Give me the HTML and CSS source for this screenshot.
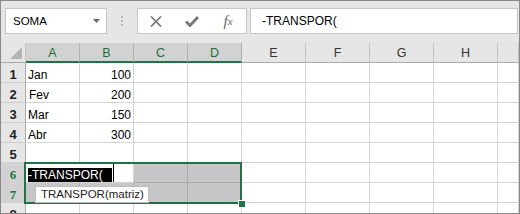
FILE: index.html
```html
<!DOCTYPE html>
<html lang="pt">
<head>
  <meta charset="UTF-8" />
  <title>Planilha - TRANSPOR</title>
  <link rel="stylesheet" href="styles.css">
</head>
<body>
  <div class="window">
    <div class="toolbar">
      <div class="namebox">
        <span>SOMA</span>
        <svg class="arrow" width="7" height="4" viewBox="0 0 7 4"><path d="M0 0h7L3.5 4z" fill="#6a6a6a"/></svg>
      </div>
      <div class="grip"><i></i><i></i><i></i></div>
      <div class="fbuttons">
        <span class="fbtn">
          <svg width="12" height="11" viewBox="0 0 12 11"><path d="M1 0.5L11 10.5M11 0.5L1 10.5" stroke="#767676" stroke-width="1.7" fill="none"/></svg>
        </span>
        <span class="fbtn">
          <svg width="14" height="11" viewBox="0 0 14 11"><path d="M1 5.5L5 9.5L13 1" stroke="#767676" stroke-width="2.8" fill="none"/></svg>
        </span>
        <span class="fbtn fx">f<small>x</small></span>
      </div>
      <div class="formula">-TRANSPOR(</div>
    </div>

    <div class="sheet">
      <div class="grid">
        <div class="corner"><b></b></div>
        <div class="ch on">A</div><div class="ch on">B</div><div class="ch on">C</div><div class="ch on">D</div>
        <div class="ch">E</div><div class="ch">F</div><div class="ch">G</div><div class="ch">H</div><div class="ch"></div>

        <div class="rh">1</div>
        <div>Jan</div><div class="num">100</div><div></div><div></div><div></div><div></div><div></div><div></div><div></div>

        <div class="rh">2</div>
        <div class="in">Fev</div><div class="num">200</div><div></div><div></div><div></div><div></div><div></div><div></div><div></div>

        <div class="rh">3</div>
        <div>Mar</div><div class="num">150</div><div></div><div></div><div></div><div></div><div></div><div></div><div></div>

        <div class="rh">4</div>
        <div>Abr</div><div class="num">300</div><div></div><div></div><div></div><div></div><div></div><div></div><div></div>

        <div class="rh">5</div>
        <div></div><div></div><div></div><div></div><div></div><div></div><div></div><div></div><div></div>

        <div class="rh on">6</div>
        <div></div><div></div><div class="shade"></div><div class="shade"></div><div></div><div></div><div></div><div></div><div></div>

        <div class="rh on">7</div>
        <div class="shade"></div><div class="shade"></div><div class="shade"></div><div class="shade"></div><div></div><div></div><div></div><div></div><div></div>

        <div class="rh">8</div>
        <div></div><div></div><div></div><div></div><div></div><div></div><div></div><div></div><div></div>
      </div>

      <div class="selection"><div class="handle"></div></div>
      <div class="editor"><span class="hl">-TRANSPOR(</span><span class="caret"></span></div>
      <div class="tip">TRANSPOR(matriz)</div>
    </div>
  </div>
</body>
</html>
```

FILE: styles.css
```css
body {
  margin: 0;
  font-family: "Liberation Sans", Arial, sans-serif;
  color: #000;
}
.window {
  width: 520px;
  height: 214px;
  box-sizing: border-box;
  border: 1px solid #8a8a8a;
  background: #e6e6e6;
  overflow: hidden;
}

/* barra de fórmulas */
.toolbar {
  display: flex;
  align-items: flex-start;
  height: 42px;
  box-sizing: border-box;
  padding: 7px 0 0 4px;
}
.namebox {
  width: 102px;
  height: 26px;
  box-sizing: border-box;
  border: 1px solid #c6c6c6;
  background: #fff;
  display: flex;
  align-items: center;
  justify-content: space-between;
  padding: 0 6px 0 7px;
  font-size: 11.5px;
}
.grip {
  width: 30px;
  display: flex;
  flex-direction: column;
  align-items: center;
  gap: 2px;
  margin-top: 8px;
}
.grip i {
  width: 2px;
  height: 2px;
  background: #b4b4b4;
}
.fbuttons {
  width: 110px;
  height: 26px;
  box-sizing: border-box;
  border: 1px solid #c6c6c6;
  background: #fff;
  display: flex;
}
.fbtn {
  width: 36px;
  display: flex;
  align-items: center;
  justify-content: center;
}
.fx {
  font-family: "Liberation Serif", "Times New Roman", serif;
  font-style: italic;
  font-size: 15px;
  color: #666;
}
.fx small {
  font-size: 11px;
}
.formula {
  flex: 1;
  height: 26px;
  box-sizing: border-box;
  margin: 0 1px 0 3px;
  border: 1px solid #c6c6c6;
  background: #fff;
  padding-left: 11px;
  font-size: 12px;
  line-height: 24px;
}

/* grade */
.sheet {
  position: relative;
}
.grid {
  display: grid;
  grid-template-columns: 25px repeat(4, 54px) repeat(4, 64px) 1fr;
  grid-auto-rows: 20px;
}
.grid > div {
  box-sizing: border-box;
  border-right: 1px solid #d4d4d4;
  border-bottom: 1px solid #d4d4d4;
  background: #fff;
  font-size: 12px;
  line-height: 14px;
  display: flex;
  align-items: flex-end;
  padding: 0 2px;
  white-space: nowrap;
  overflow: hidden;
}
.grid > .in {
  padding-left: 3px;
}
.grid > .num {
  justify-content: flex-end;
}
.grid > .shade {
  background: #c6c6c6;
  border-color: #ababab;
}
.grid > .corner {
  position: relative;
  background: #e6e6e6;
  border-right-color: #c3c3c3;
  border-bottom-color: #ababab;
}
.corner b {
  position: absolute;
  right: 3px;
  bottom: 3px;
  width: 0;
  height: 0;
  border-left: 12px solid transparent;
  border-bottom: 12px solid #b4b4b4;
}
.grid > .ch {
  background: #e6e6e6;
  color: #333;
  font-size: 12.5px;
  border-right-color: #c3c3c3;
  border-bottom-color: #ababab;
  align-items: center;
  justify-content: center;
  padding-top: 1px;
}
.grid > .ch.on {
  background: #d2d2d2;
  color: #1e6b40;
  border-right-color: #b0b0b0;
  border-bottom: 2px solid #217346;
}
.grid > .rh {
  background: #e6e6e6;
  color: #222;
  font-weight: bold;
  font-size: 13px;
  justify-content: center;
  border-right-color: #ababab;
  border-bottom-color: #cfcfcf;
}
.grid > .rh.on {
  background: #d2d2d2;
  color: #217346;
  font-family: "Liberation Serif", "Times New Roman", serif;
}

/* seleção e edição */
.selection {
  position: absolute;
  left: 23px;
  top: 119px;
  width: 218px;
  height: 42px;
  box-sizing: border-box;
  border: 2px solid #217346;
}
.handle {
  position: absolute;
  right: -6px;
  bottom: -6px;
  width: 6px;
  height: 6px;
  background: #217346;
  border: 1px solid #fff;
}
.editor {
  position: absolute;
  left: 25px;
  top: 121px;
  width: 107px;
  height: 18px;
  background: #fff;
  display: flex;
  align-items: flex-start;
}
.hl {
  margin: 4px 0 0 2px;
  padding-right: 9px;
  height: 14px;
  line-height: 14px;
  font-size: 12px;
  background: #000;
  color: #fff;
}
.caret {
  width: 1px;
  height: 18px;
  margin-left: 1px;
  background: #000;
}
.tip {
  position: absolute;
  left: 34px;
  top: 143px;
  width: 114px;
  height: 17px;
  box-sizing: border-box;
  border: 1px solid #bebebe;
  background: #fff;
  padding-left: 5px;
  font-size: 11.5px;
  line-height: 15px;
  color: #222;
}
```
